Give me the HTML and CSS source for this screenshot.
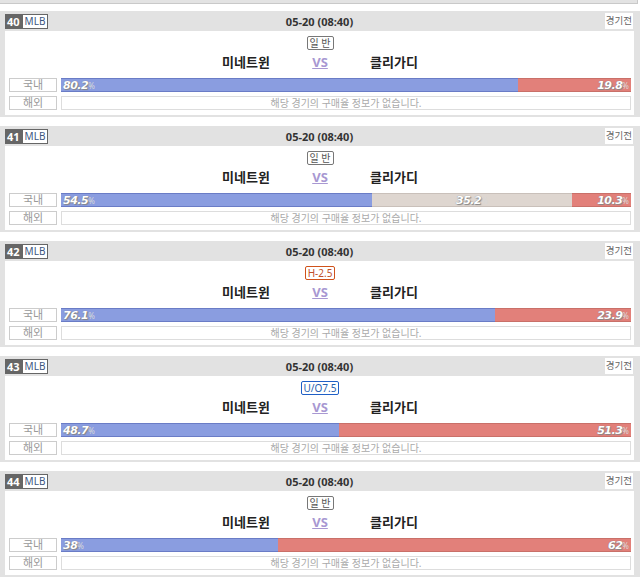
FILE: index.html
```html
<!DOCTYPE html>
<html lang="ko">
<head>
  <meta charset="UTF-8">
  <meta name="viewport" content="width=device-width, initial-scale=1">
  <title>경기 목록</title>
  <link rel="stylesheet" href="styles.css">
</head>
<body>

  <div class="prev-edge"></div>

  <!-- 40 -->
  <div class="game">
    <div class="game-head">
      <div class="game-id"><span class="num">40</span><span class="league">MLB</span></div>
      <div class="game-date">05-20 (08:40)</div>
      <div class="game-state"><span>경기전</span></div>
    </div>
    <div class="game-body">
      <div class="bet-type"><span class="tag">일 반</span></div>
      <div class="teams">
        <span class="team">미네트윈</span>
        <span class="vs">VS</span>
        <span class="team">클리가디</span>
      </div>
      <div class="rate-row">
        <span class="rate-label">국내</span>
        <div class="rate-bar">
          <div class="seg home" style="width: 80.2%"><b>80.2</b><i>%</i></div>
          <div class="seg away" style="width: 19.8%"><b>19.8</b><i>%</i></div>
        </div>
      </div>
      <div class="rate-row">
        <span class="rate-label">해외</span>
        <div class="rate-empty">해당 경기의 구매율 정보가 없습니다.</div>
      </div>
    </div>
  </div>

  <!-- 41 -->
  <div class="game">
    <div class="game-head">
      <div class="game-id"><span class="num">41</span><span class="league">MLB</span></div>
      <div class="game-date">05-20 (08:40)</div>
      <div class="game-state"><span>경기전</span></div>
    </div>
    <div class="game-body">
      <div class="bet-type"><span class="tag">일 반</span></div>
      <div class="teams">
        <span class="team">미네트윈</span>
        <span class="vs">VS</span>
        <span class="team">클리가디</span>
      </div>
      <div class="rate-row">
        <span class="rate-label">국내</span>
        <div class="rate-bar">
          <div class="seg home" style="width: 54.5%"><b>54.5</b><i>%</i></div>
          <div class="seg draw" style="width: 35.2%"><b>35.2</b><i>%</i></div>
          <div class="seg away" style="width: 10.3%"><b>10.3</b><i>%</i></div>
        </div>
      </div>
      <div class="rate-row">
        <span class="rate-label">해외</span>
        <div class="rate-empty">해당 경기의 구매율 정보가 없습니다.</div>
      </div>
    </div>
  </div>

  <!-- 42 -->
  <div class="game">
    <div class="game-head">
      <div class="game-id"><span class="num">42</span><span class="league">MLB</span></div>
      <div class="game-date">05-20 (08:40)</div>
      <div class="game-state"><span>경기전</span></div>
    </div>
    <div class="game-body">
      <div class="bet-type"><span class="tag handi">H-2.5</span></div>
      <div class="teams">
        <span class="team">미네트윈</span>
        <span class="vs">VS</span>
        <span class="team">클리가디</span>
      </div>
      <div class="rate-row">
        <span class="rate-label">국내</span>
        <div class="rate-bar">
          <div class="seg home" style="width: 76.1%"><b>76.1</b><i>%</i></div>
          <div class="seg away" style="width: 23.9%"><b>23.9</b><i>%</i></div>
        </div>
      </div>
      <div class="rate-row">
        <span class="rate-label">해외</span>
        <div class="rate-empty">해당 경기의 구매율 정보가 없습니다.</div>
      </div>
    </div>
  </div>

  <!-- 43 -->
  <div class="game">
    <div class="game-head">
      <div class="game-id"><span class="num">43</span><span class="league">MLB</span></div>
      <div class="game-date">05-20 (08:40)</div>
      <div class="game-state"><span>경기전</span></div>
    </div>
    <div class="game-body">
      <div class="bet-type"><span class="tag under">U/O7.5</span></div>
      <div class="teams">
        <span class="team">미네트윈</span>
        <span class="vs">VS</span>
        <span class="team">클리가디</span>
      </div>
      <div class="rate-row">
        <span class="rate-label">국내</span>
        <div class="rate-bar">
          <div class="seg home" style="width: 48.7%"><b>48.7</b><i>%</i></div>
          <div class="seg away" style="width: 51.3%"><b>51.3</b><i>%</i></div>
        </div>
      </div>
      <div class="rate-row">
        <span class="rate-label">해외</span>
        <div class="rate-empty">해당 경기의 구매율 정보가 없습니다.</div>
      </div>
    </div>
  </div>

  <!-- 44 -->
  <div class="game">
    <div class="game-head">
      <div class="game-id"><span class="num">44</span><span class="league">MLB</span></div>
      <div class="game-date">05-20 (08:40)</div>
      <div class="game-state"><span>경기전</span></div>
    </div>
    <div class="game-body">
      <div class="bet-type"><span class="tag">일 반</span></div>
      <div class="teams">
        <span class="team">미네트윈</span>
        <span class="vs">VS</span>
        <span class="team">클리가디</span>
      </div>
      <div class="rate-row">
        <span class="rate-label">국내</span>
        <div class="rate-bar">
          <div class="seg home" style="width: 38%"><b>38</b><i>%</i></div>
          <div class="seg away" style="width: 62%"><b>62</b><i>%</i></div>
        </div>
      </div>
      <div class="rate-row">
        <span class="rate-label">해외</span>
        <div class="rate-empty">해당 경기의 구매율 정보가 없습니다.</div>
      </div>
    </div>
  </div>

</body>
</html>
```

FILE: styles.css
```css
body {
  margin: 0;
  background: #fff;
  font-family: "Noto Sans", "Noto Sans CJK KR", sans-serif;
  font-size: 11px;
  color: #333;
  overflow: hidden;
}

.prev-edge {
  height: 3px;
  margin-right: 5px;
  background: #e3e3e3;
  border-bottom: 1px solid #c9c9c9;
  border-right: 1px solid #c9c9c9;
}

.game {
  width: 629px;
  height: 104px;
  margin: 7px 0 0;
  padding: 0 6px 2px 5px;
  background: #e2e2e2;
}

.game + .game {
  margin-top: 9px;
}

/* 상단 */
.game-head {
  height: 20px;
  display: grid;
  grid-template-columns: 1fr auto 1fr;
  align-items: center;
}

.game-id {
  display: flex;
  align-items: center;
}

.game-id .num {
  background: #666;
  color: #fff;
  font-weight: bold;
  height: 15px;
  line-height: 15px;
  padding: 0 2px;
  font-size: 11px;
}

.game-id .league {
  background: #fff;
  color: #3d5680;
  border: 1px solid #666;
  height: 13px;
  line-height: 13px;
  padding: 0 2px;
  font-size: 10px;
}

.game-date {
  font-weight: bold;
  font-size: 11px;
  color: #333;
}

.game-state {
  display: flex;
  justify-content: flex-end;
  padding-right: 1px;
}

.game-state span {
  background: #fff;
  color: #666;
  font-size: 9.5px;
  height: 16px;
  line-height: 16px;
  padding: 0 1px;
}

/* 본문 */
.game-body {
  background: #fff;
  height: 84px;
  padding: 5px 3px 0 4px;
  box-sizing: border-box;
}

.bet-type {
  display: flex;
  justify-content: center;
  height: 14px;
}

.tag {
  border: 1px solid #777;
  border-radius: 2px;
  color: #555;
  font-size: 10px;
  line-height: 12px;
  height: 12px;
  padding: 0 2px;
  background: #fff;
}

.tag.handi {
  border-color: #d0521a;
  color: #c0502a;
}

.tag.under {
  border-color: #1f5fc6;
  color: #1f5fb0;
}

.teams {
  display: flex;
  justify-content: center;
  height: 23px;
  align-items: center;
  margin-bottom: 5px;
}

.team, .vs {
  width: 74px;
  text-align: center;
  font-weight: bold;
  font-size: 13px;
}

.team {
  color: #222;
}

.vs {
  color: #a898d2;
  text-decoration: underline;
}

.rate-row {
  display: flex;
  gap: 4px;
  height: 14px;
  margin-bottom: 4px;
}

.rate-label {
  width: 46px;
  border: 1px solid #ccc;
  color: #999;
  text-align: center;
  line-height: 12px;
  font-size: 11px;
  flex: none;
}

.rate-bar {
  flex: 1;
  display: flex;
}

.seg {
  box-sizing: border-box;
  height: 14px;
  line-height: 12px;
  border-top: 1px solid #6a7cc6;
  border-bottom: 1px solid #6a7cc6;
  padding: 0 2px;
  white-space: nowrap;
  overflow: hidden;
}

.seg b {
  font-family: "DejaVu Sans", sans-serif;
  font-style: italic;
  font-weight: bold;
  font-size: 11px;
  color: #fff;
  letter-spacing: -0.5px;
  text-shadow: 0 0 1px #777, 1px 1px 1px #888;
}

.seg i {
  font-style: normal;
  font-size: 8px;
  color: #d8d8d8;
}

.seg.home {
  background: #8a9de0;
}

.seg.draw {
  background: #ded6d0;
  border-color: #c9c0ba;
  text-align: center;
}

.seg.away {
  background: #e2807a;
  border-color: #c97069;
  text-align: right;
}

.rate-empty {
  flex: 1;
  border: 1px solid #ddd;
  color: #aaa;
  text-align: center;
  font-size: 10px;
  line-height: 12px;
}
```
